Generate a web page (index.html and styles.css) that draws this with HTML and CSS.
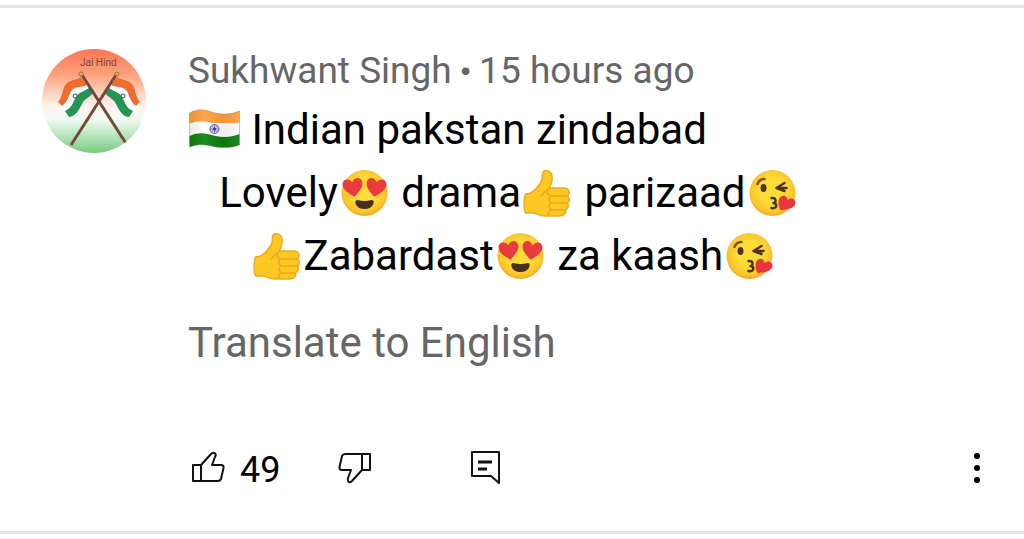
FILE: index.html
```html
<!DOCTYPE html>
<html lang="en">
<head>
    <meta charset="UTF-8">
    <meta name="viewport" content="width=device-width, initial-scale=1.0">
    <title>Comments</title>
    <link rel="stylesheet" href="styles.css">
</head>
<body>
    <!-- emoji shapes used in the comment text -->
    <svg class="defs" aria-hidden="true">
        <defs>
            <radialGradient id="face-color" cx="50%" cy="45%" r="55%">
                <stop offset="0.5" stop-color="#fddb38"/>
                <stop offset="0.85" stop-color="#fbc52c"/>
                <stop offset="1" stop-color="#f2a623"/>
            </radialGradient>
            <linearGradient id="flag-shade">
                <stop offset="0" stop-color="#000" stop-opacity="0.08"/>
                <stop offset="0.3" stop-color="#fff" stop-opacity="0.08"/>
                <stop offset="0.7" stop-color="#000" stop-opacity="0.06"/>
                <stop offset="1" stop-color="#fff" stop-opacity="0.08"/>
            </linearGradient>
        </defs>
        <symbol id="heart" viewBox="0 0 20 20">
            <path d="M10 19C5 15 0 11 .5 6C1 1 7 0 10 5C13 0 19 1 19.500 6C20 11 15 15 10 19Z"/>
        </symbol>
        <symbol id="emoji-flag" viewBox="0 0 52 52">
            <path fill="#ff9f3e" d="M1 9C12 3 19 7 27 9C36 11 43 10 51 7V19H1Z"/>
            <path fill="#fff" d="M1 20C12 15 19 18 27 20C36 22 43 21 51 18V31L1 34Z"/>
            <path fill="#0b800f" d="M1 32C12 27 19 30 27 32C36 34 43 33 51 30V41C43 44 36 44 27 43C19 41 12 39 1 43Z"/>
            <path fill="url(#flag-shade)" stroke="#777" stroke-opacity="0.4" d="M1 9C12 3 19 7 27 9C36 11 43 10 51 7V41C43 44 36 44 27 43C19 41 12 39 1 43Z"/>
            <circle cx="26" cy="25" r="4.500" fill="#d9daf2" stroke="#5355a8"/>
            <path stroke="#5355a8" stroke-width="0.7" d="M26 21V29M22 25H30M23 22L29 28M29 22L23 28"/>
            <circle cx="26" cy="25" r="1.500" fill="#34368f"/>
        </symbol>
        <symbol id="emoji-love" viewBox="0 0 52 52">
            <circle cx="26" cy="26" r="23" fill="url(#face-color)"/>
            <g fill="#eb3b41">
                <use href="#heart" x="4" y="10" width="21" height="21" transform="rotate(-9 14 20)"/>
                <use href="#heart" x="27" y="10" width="21" height="21" transform="rotate(9 38 20)"/>
            </g>
            <path fill="#46301f" d="M19 33Q26 35 33 33C37 32 36 42 26 42S15 32 19 33Z"/>
        </symbol>
        <symbol id="emoji-kiss" viewBox="0 0 52 52">
            <circle cx="26" cy="26" r="23" fill="url(#face-color)"/>
            <g fill="none" stroke="#4b3420" stroke-width="2.500" stroke-linecap="round" stroke-linejoin="round">
                <path d="M11 17Q13 12 18 12" stroke="#7b531d"/>
                <path d="M38 16L30 21L38 24M31 21L40 21"/>
                <path d="M25 31C30 30 30 36 27 36C31 36 31 42 25 41"/>
            </g>
            <ellipse cx="17" cy="21" rx="3" ry="4" fill="#4b3420"/>
            <path fill="#e83640" d="M34 43C31 38 31 30 36 29C39 28 41 31 41 33C45 30 49 32 49 36C49 41 40 43 34 43Z"/>
        </symbol>
        <symbol id="emoji-thumb" viewBox="0 0 52 52">
            <path fill="#fdc821" stroke="#eeaa24" stroke-width="1.500" stroke-linejoin="round" d="M4 27C10 27 13 24 16 20C20 15 21 13 21 7C21 2 28 3 30 7C32 12 30 16 28 21H42C48 21 49 26 46 29C49 31 48 35 46 36C48 39 46 42 44 43C45 47 42 49 38 49H23C17 49 16 46 11 46H4C2 41 2 32 4 27Z"/>
            <path fill="none" stroke="#eba52a" stroke-width="1.500" stroke-linecap="round" d="M28 21C25 23 22 25 20 29M46 29H32C27 29 25 27 26 24M46 36H32C28 36 26 33 28 30M44 43H31C27 42 27 38 29 36M31 43C27 43 26 46 28 48"/>
        </symbol>
    </svg>

    <article class="comment">
        <svg class="avatar" viewBox="0 0 104 104" role="img" aria-label="Sukhwant Singh">
            <defs>
                <linearGradient id="avatar-bg" x2="0" y2="1">
                    <stop offset="0" stop-color="#fb7650"/>
                    <stop offset="0.25" stop-color="#fca27f"/>
                    <stop offset="0.55" stop-color="#fff4ef"/>
                    <stop offset="0.68" stop-color="#f0fbf1"/>
                    <stop offset="1" stop-color="#7acb80"/>
                </linearGradient>
                <clipPath id="avatar-clip"><circle cx="52" cy="52" r="52"/></clipPath>
                <g id="avatar-flag">
                    <path fill="#fff" d="M39 28C32 32 28 30 23 36C20 41 21 47 16 53L27 68C38 64 36 53 51 44Z"/>
                    <path fill="#ec6d2d" d="M39 28C32 32 28 30 23 36C20 41 21 47 16 53L20 57C27 52 26 46 30 41C34 37 38 39 45 36Z"/>
                    <path fill="#239653" d="M47 39C41 43 37 43 34 48C30 55 30 59 23 62L27 68C34 67 37 61 40 55C43 49 47 49 51 44Z"/>
                    <circle cx="33" cy="47" r="2" fill="#fff" stroke="#354568"/>
                    <path stroke="#74483b" stroke-width="3" d="M40 26L85 96"/>
                    <circle cx="39" cy="25" r="2" fill="#dcae55" stroke="#a77332"/>
                </g>
            </defs>
            <g clip-path="url(#avatar-clip)">
                <rect width="104" height="104" fill="url(#avatar-bg)"/>
                <use href="#avatar-flag" transform="translate(114 0) scale(-1 1)"/>
                <use href="#avatar-flag"/>
                <text class="avatar-text" x="38" y="17">Jai Hind</text>
            </g>
        </svg>
        <div class="content">
            <div class="meta">Sukhwant Singh<span class="dot"> • </span>15 hours ago</div>
            <p class="text">
                <svg class="emoji" role="img" aria-label="India"><use href="#emoji-flag"/></svg> Indian pakstan zindabad<br>
                &nbsp;&nbsp;&nbsp;Lovely<svg class="emoji" role="img" aria-label="heart eyes"><use href="#emoji-love"/></svg> drama<svg class="emoji" role="img" aria-label="thumbs up"><use href="#emoji-thumb"/></svg> parizaad<svg class="emoji" role="img" aria-label="kiss"><use href="#emoji-kiss"/></svg><br>
                &nbsp;&nbsp;&nbsp;&nbsp;&nbsp;&nbsp;<svg class="emoji" role="img" aria-label="thumbs up"><use href="#emoji-thumb"/></svg>Zabardast<svg class="emoji" role="img" aria-label="heart eyes"><use href="#emoji-love"/></svg> za kaash<svg class="emoji" role="img" aria-label="kiss"><use href="#emoji-kiss"/></svg>
            </p>
            <button class="translate">Translate to English</button>
            <div class="actions">
                <button class="like" aria-label="Like, 49">
                    <svg class="icon" viewBox="0 0 40 40"><path d="M5 15H13V31H5ZM13 15L23 4C26 1 29 4 27 7L24 15H33Q36 15 35.500 18L33 29Q32 31 30 31H13"/></svg>
                    <span>49</span>
                </button>
                <button aria-label="Dislike">
                    <svg class="icon" viewBox="0 0 40 40"><path d="M28 4H36V20H28ZM28 20L18 31C15 34 13 31 14 28L17 20H8Q5 20 5.500 17L8 6Q9 4 11 4H28"/></svg>
                </button>
                <button class="reply" aria-label="Reply">
                    <svg class="icon" viewBox="0 0 40 40"><path d="M6 2H33V33L25 26H6Z"/><path class="lines" d="M12 12H26M12 19H21"/></svg>
                </button>
                <button class="more" aria-label="More">
                    <svg class="dots" viewBox="0 0 10 40"><circle cx="5" cy="6" r="3"/><circle cx="5" cy="18" r="3"/><circle cx="5" cy="30" r="3"/></svg>
                </button>
            </div>
        </div>
    </article>
</body>
</html>
```
FILE: styles.css
```css
body {
    margin: 0;
    padding-top: 5px;
    background-color: #fff;
    font-family: Roboto, sans-serif;
}
.defs {
    position: absolute;
    width: 0;
    height: 0;
}
.comment {
    display: flex;
    gap: 42px;
    padding: 40px 42px 37px;
    border-top: 3px solid #e5e5e5;
    border-bottom: 3px solid #e5e5e5;
}
.avatar {
    flex: none;
    width: 104px;
    height: 104px;
    margin-top: 1px;
}
.avatar-text {
    font-size: 10px;
    fill: #80453d;
}
.content {
    flex: 1;
}
.meta {
    color: #666;
    font-size: 37px;
    line-height: 46px;
}
.dot {
    font-size: 32px;
    font-weight: bold;
}
.text {
    margin: 3px 0 0;
    color: #000;
    font-size: 42px;
    line-height: 63px;
}
.emoji {
    width: 53px;
    height: 52px;
    vertical-align: -12px;
}
button {
    padding: 0;
    border: none;
    background: none;
    color: #000;
    font-family: inherit;
    cursor: pointer;
}
.translate {
    display: block;
    margin-top: 24px;
    color: #666;
    font-size: 42px;
    line-height: 63px;
}
.actions {
    display: flex;
    align-items: center;
    margin-top: 72px;
}
.actions button {
    display: flex;
    align-items: center;
    height: 48px;
}
.like {
    gap: 12px;
    margin-right: 54px;
    font-size: 36px;
}
.icon {
    width: 40px;
    height: 40px;
    fill: none;
    stroke: #111;
    stroke-width: 2;
    stroke-linejoin: round;
}
.icon .lines {
    stroke-width: 3;
}
.reply {
    margin-left: 92px;
}
.more {
    margin-left: auto;
}
.dots {
    width: 10px;
    height: 40px;
}
```
